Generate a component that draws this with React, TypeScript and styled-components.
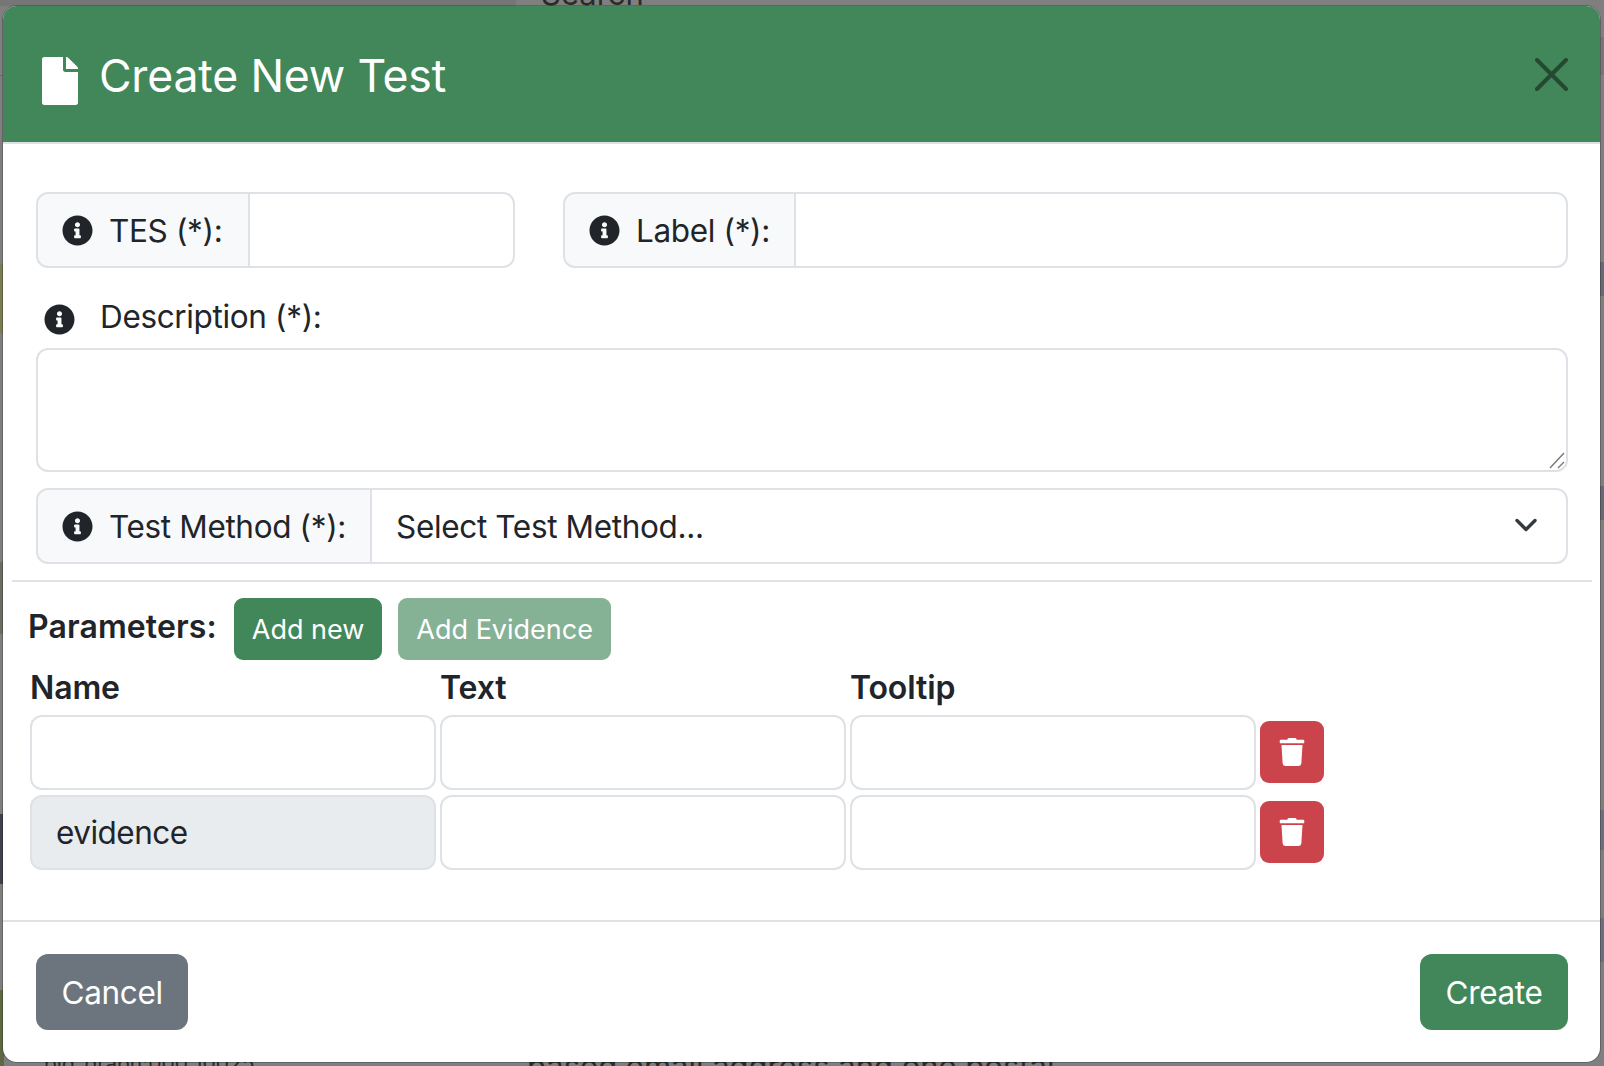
import React from "react";
import styled, { createGlobalStyle } from "styled-components";
import { FaFile, FaInfoCircle, FaTrash } from "react-icons/fa";

const GlobalStyle = createGlobalStyle`
  html, body {
    margin: 0;
    padding: 0;
    background: #808080;
    font-family: Inter, "Liberation Sans", sans-serif;
    color: #212529;
  }
  * { box-sizing: border-box; }
`;

const Backdrop = styled.div`
  position: relative;
  width: 1604px;
  height: 1066px;
  overflow: hidden;
  background: #7f7f7f;
  padding: 6px 4px 4px 3px;
`;

// bits of the page behind the modal that peek out round its edges
const Band = styled.div<{ $top: number; $height: number; $right?: boolean; $color: string }>`
  position: absolute;
  top: ${({ $top }) => $top}px;
  height: ${({ $height }) => $height}px;
  width: 4px;
  ${({ $right }) => ($right ? "right: 0;" : "left: 0;")}
  background: ${({ $color }) => $color};
`;

const TopStrip = styled.div`
  position: absolute;
  top: 0;
  left: 0;
  width: 516px;
  height: 6px;
  background: #767676;
`;

const BehindText = styled.div<{ $top: number; $left: number; $size: number }>`
  position: absolute;
  top: ${({ $top }) => $top}px;
  left: ${({ $left }) => $left}px;
  font-size: ${({ $size }) => $size}px;
  line-height: 1;
  white-space: nowrap;
  color: #2a2a2a;
`;

const Modal = styled.div`
  position: relative;
  display: flex;
  flex-direction: column;
  height: 1056px;
  background: #fff;
  border-radius: 14px;
  overflow: hidden;
  box-shadow: 0 0 0 1px rgba(0, 0, 0, 0.22);
`;

const Header = styled.div`
  display: flex;
  align-items: center;
  height: 138px;
  padding: 6px 32px 0 39px;
  background: #41875a;
  border-bottom: 2px solid #dee2e6;
  color: #fff;
`;

const Title = styled.h2`
  flex: 1;
  display: flex;
  align-items: center;
  gap: 21px;
  margin: 0;
  font-size: 44.6px;
  font-weight: 400;
  line-height: 1.2;
  letter-spacing: -0.2px;
`;

const FileIcon = styled(FaFile)`
  flex: none;
  width: 36px;
  height: 48px;
  margin-top: 8px;
`;

const CloseButton = styled.button`
  display: flex;
  margin-bottom: 6px;
  padding: 0;
  border: 0;
  background: none;
  color: #25492f;
`;

const Body = styled.div`
  flex: 1;
  display: flex;
  flex-direction: column;
  padding: 48px 32px 0 33px;
`;

const TopRow = styled.div`
  display: flex;
  gap: 48px;
`;

const InputGroup = styled.div<{ $width?: number }>`
  position: relative;
  display: flex;
  height: 76px;
  flex: ${({ $width }) => ($width ? `0 0 ${$width}px` : "1")};
`;

const MethodGroup = styled(InputGroup)`
  flex: none;
`;

const Addon = styled.label<{ $width: number }>`
  display: flex;
  align-items: center;
  gap: 16px;
  flex: 0 0 ${({ $width }) => $width}px;
  padding: 0 24px;
  background: #f8f9fa;
  border: 2px solid #dee2e6;
  border-radius: 12px 0 0 12px;
  font-size: 31.5px;
  letter-spacing: -0.35px;
  white-space: nowrap;
`;

const InfoIcon = styled(FaInfoCircle)`
  flex: none;
  width: 31px;
  height: 31px;
  color: #212529;
`;

const GroupInput = styled.input`
  flex: 1;
  min-width: 0;
  margin-left: -2px;
  background: #fff;
  border: 2px solid #dee2e6;
  border-radius: 0 12px 12px 0;
  outline: none;
`;

const GroupSelect = styled.select`
  flex: 1;
  min-width: 0;
  margin-left: -2px;
  padding: 0 24px;
  appearance: none;
  background: #fff;
  border: 2px solid #dee2e6;
  border-radius: 0 12px 12px 0;
  font: inherit;
  font-size: 31.5px;
  letter-spacing: -0.35px;
  color: #212529;
  outline: none;
`;

const Chevron = styled.svg`
  position: absolute;
  right: 30px;
  top: 29px;
  pointer-events: none;
`;

const DescriptionLabel = styled.label`
  display: flex;
  align-items: center;
  gap: 25px;
  height: 80px;
  padding: 17px 0 0 8px;
  font-size: 31.5px;
  letter-spacing: -0.35px;
`;

const DescriptionIcon = styled(InfoIcon)`
  margin-top: 6px;
`;

const TextAreaWrap = styled.div`
  position: relative;
  margin-bottom: 16px;
`;

const TextArea = styled.textarea`
  display: block;
  width: 100%;
  height: 124px;
  resize: none;
  background: #fff;
  border: 2px solid #dee2e6;
  border-radius: 12px;
  outline: none;
`;

const ResizeGrip = styled.svg`
  position: absolute;
  right: 0;
  bottom: 0;
  pointer-events: none;
`;

const Divider = styled.hr`
  height: 2px;
  margin: 16px -24px 16px -24px;
  border: 0;
  background: #dee2e6;
`;

const ParamsHead = styled.div`
  display: flex;
  align-items: center;
  gap: 16px;
  margin-left: -8px;
  height: 62px;
`;

const ParamsTitle = styled.span`
  margin: 0 1px 6px 0;
  font-size: 32px;
  font-weight: 600;
  letter-spacing: 0.1px;
`;

const Button = styled.button<{ $variant?: "primary" | "faded" | "secondary" | "danger" }>`
  display: flex;
  align-items: center;
  justify-content: center;
  padding: 0 18px;
  border: 0;
  border-radius: 9px;
  font-family: inherit;
  font-size: 27px;
  color: #fff;
  background: ${({ $variant }) =>
    $variant === "faded"
      ? "#85b195"
      : $variant === "secondary"
        ? "#6c757d"
        : $variant === "danger"
          ? "#cc444b"
          : "#41875a"};
`;

const SmallButton = styled(Button)`
  height: 62px;
`;

const ParamsGrid = styled.div`
  display: grid;
  grid-template-columns: 406px 406px 406px 64px;
  column-gap: 4px;
  row-gap: 5px;
  margin-left: -6px;
  align-items: center;
`;

const ColumnHead = styled.div`
  height: 50px;
  padding-top: 10px;
  font-size: 32px;
  font-weight: 600;
  line-height: 36px;
  letter-spacing: -0.12px;
`;

const ParamInput = styled.input`
  width: 100%;
  height: 75px;
  padding: 0 24px;
  background: ${({ disabled }) => (disabled ? "#e9ecef" : "#fff")};
  border: 2px solid #dee2e6;
  border-radius: 12px;
  font-family: inherit;
  font-size: 31.5px;
  letter-spacing: -0.5px;
  color: #212529;
  outline: none;
  opacity: 1;
`;

const TrashButton = styled(Button)`
  height: 62px;
  margin-bottom: 1px;
  padding: 0;
`;

const Footer = styled.div`
  display: flex;
  align-items: center;
  justify-content: space-between;
  height: 142px;
  padding: 0 32px 0 33px;
  border-top: 2px solid #dee2e6;
`;

const FooterButton = styled(Button)`
  height: 76px;
  padding: 0 25.5px;
  border-radius: 12px;
  font-size: 31.5px;
  letter-spacing: -0.35px;
`;

const leftBands = [
  { top: 75, height: 1, color: "#6d6d6d" },
  { top: 264, height: 70, color: "#7a7b55" },
  { top: 562, height: 72, color: "#6d6c62" },
  { top: 814, height: 70, color: "#3f414c" },
  { top: 990, height: 76, color: "#5e6844" },
];

const rightBands = [
  { top: 37, height: 38, color: "#767676" },
  { top: 262, height: 34, color: "#666a74" },
  { top: 486, height: 34, color: "#666a74" },
  { top: 810, height: 40, color: "#6c707c" },
  { top: 918, height: 44, color: "#6c707c" },
];

const paramRows = [
  { id: 1, name: "" },
  { id: 2, name: "evidence" },
];

const App: React.FC = () => {
  return (
    <Backdrop>
      <GlobalStyle />
      <TopStrip />
      {leftBands.map((b) => (
        <Band key={b.top} $top={b.top} $height={b.height} $color={b.color} />
      ))}
      {rightBands.map((b) => (
        <Band key={b.top} $right $top={b.top} $height={b.height} $color={b.color} />
      ))}
      <BehindText $top={-22} $left={541} $size={31}>Search</BehindText>
      <BehindText $top={1053} $left={44} $size={21}>pid_graph:000 10025</BehindText>
      <BehindText $top={1050} $left={527} $size={31}>based email address and one postal</BehindText>

      <Modal>
        <Header>
          <Title>
            <FileIcon />
            Create New Test
          </Title>
          <CloseButton aria-label="Close">
            <svg width="33" height="33" viewBox="0 0 33 33" fill="none" stroke="currentColor" strokeWidth="4" strokeLinecap="round">
              <path d="M2 2 31 31M31 2 2 31" />
            </svg>
          </CloseButton>
        </Header>

        <Body>
          <TopRow>
            <InputGroup $width={479}>
              <Addon $width={214}>
                <InfoIcon />
                TES (*):
              </Addon>
              <GroupInput />
            </InputGroup>
            <InputGroup>
              <Addon $width={233}>
                <InfoIcon />
                Label (*):
              </Addon>
              <GroupInput />
            </InputGroup>
          </TopRow>

          <DescriptionLabel>
            <DescriptionIcon />
            Description (*):
          </DescriptionLabel>
          <TextAreaWrap>
            <TextArea />
            <ResizeGrip width="20" height="20" viewBox="0 0 20 20" fill="none" stroke="#777" strokeWidth="1.4">
              <path d="M2 16 16 1M10 16 16 10" />
            </ResizeGrip>
          </TextAreaWrap>

          <MethodGroup>
            <Addon $width={329}>
              <InfoIcon />
              Test Method (*):
            </Addon>
            <GroupSelect defaultValue="">
              <option value="">Select Test Method...</option>
            </GroupSelect>
            <Chevron width="24" height="16" viewBox="0 0 24 16" fill="none" stroke="#343a40" strokeWidth="3.4" strokeLinecap="round" strokeLinejoin="round">
              <path d="M3 3.5 12 12.5 21 3.5" />
            </Chevron>
          </MethodGroup>

          <Divider />

          <ParamsHead>
            <ParamsTitle>Parameters:</ParamsTitle>
            <SmallButton>Add new</SmallButton>
            <SmallButton $variant="faded">Add Evidence</SmallButton>
          </ParamsHead>

          <ParamsGrid>
            <ColumnHead>Name</ColumnHead>
            <ColumnHead>Text</ColumnHead>
            <ColumnHead>Tooltip</ColumnHead>
            <span />
            {paramRows.map((row) => (
              <React.Fragment key={row.id}>
                <ParamInput disabled={!!row.name} defaultValue={row.name} />
                <ParamInput />
                <ParamInput />
                <TrashButton $variant="danger" aria-label="Delete">
                  <FaTrash size={28} />
                </TrashButton>
              </React.Fragment>
            ))}
          </ParamsGrid>
        </Body>

        <Footer>
          <FooterButton $variant="secondary">Cancel</FooterButton>
          <FooterButton>Create</FooterButton>
        </Footer>
      </Modal>
    </Backdrop>
  );
};

export default App;
